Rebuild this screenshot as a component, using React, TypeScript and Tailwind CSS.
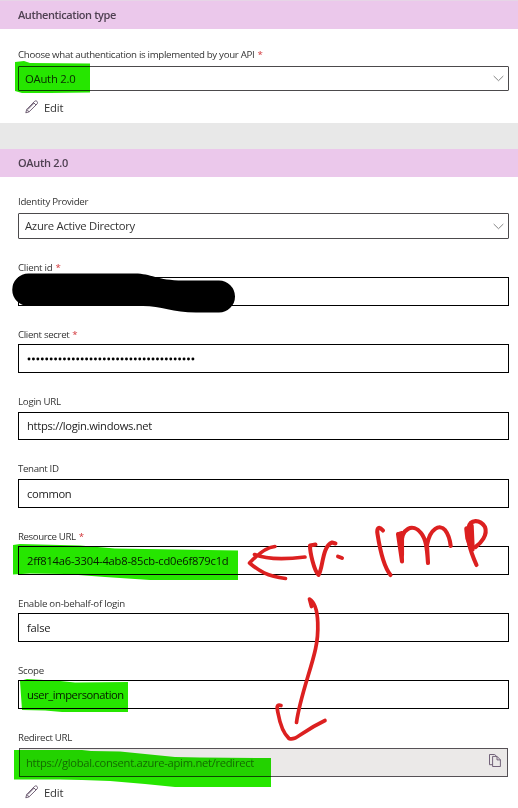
import React from "react";

const Label = ({ text, required, className }: { text: string; required?: boolean; className: string }) => (
  <div className={`flex h-4 items-center gap-[3px] whitespace-nowrap pt-0.5 text-[9.7px] leading-4 text-[#333] ${className}`}>
    <span>{text}</span>
    {required && <span className="text-[#d13438]">*</span>}
  </div>
);

const Chevron = () => (
  <svg className="mr-[4px] h-[7px] w-[11px]" viewBox="0 0 11 7" fill="none" stroke="#777" strokeWidth="0.9">
    <path d="M.7 1 5.5 5.7 10.3 1" />
  </svg>
);

const Select = ({ value, className }: { value: string; className: string }) => (
  <div className="mt-1 flex items-center justify-between rounded-[1px] border border-[#4c4a4c] pl-1.5">
    <span className={`whitespace-nowrap text-[11.3px] leading-6 text-[#333] ${className}`}>{value}</span>
    <Chevron />
  </div>
);

const Input = ({ className, textClass, children }: { className: string; textClass: string; children?: React.ReactNode }) => (
  <div className={`flex items-center border border-black pl-2 pt-px text-[11.2px] text-[#222] ${className}`}>
    <span className={`whitespace-nowrap ${textClass}`}>{children}</span>
  </div>
);

const Edit = () => (
  <div className="flex h-5 items-center gap-[6px] pl-[7px] text-[11.3px] text-[#333]">
    <svg className="mb-0.5 h-[14px] w-[13px]" viewBox="0 0 13 14" fill="none" stroke="#59465f" strokeWidth="0.85" strokeLinejoin="round">
      <path d="M.8 12.8 1.7 9.5 9.4 1.5C10.2.7 11.2.7 12 1.4S12.7 3.2 12 4L4.1 11.8ZM1.7 9.5l2.4 2.3M8.5 2.5l2.5 2.5M2.8 9.5 9.2 3" />
    </svg>
    <span className="tracking-[-0.2px]">Edit</span>
  </div>
);

const SectionTitle = ({ text, className }: { text: string; className: string }) => (
  <div className={`flex items-center bg-[#ebc8eb] pl-[18px] text-[11px] font-semibold text-[#4f4152] ${className}`}>{text}</div>
);

export default function App() {
  return (
    <div className="relative isolate h-[808px] w-[518px] overflow-hidden bg-white font-['Open_Sans','Noto_Sans',sans-serif]">
      <SectionTitle text="Authentication type" className="h-[29px] border-t border-[#e6d5e6] tracking-[-0.4px]" />
      <section className="h-[94px] pl-[18px] pr-[9px] pt-[17px]">
        <Label text="Choose what authentication is implemented by your API" required className="tracking-[-0.31px]" />
        <div className="h-[25px] [&>div]:h-[25px]"><Select value="OAuth 2.0" className="tracking-[-0.25px]" /></div>
        <div className="mt-[7px]"><Edit /></div>
      </section>
      <div className="h-[26px] bg-[#e8e8e8]" />
      <SectionTitle text="OAuth 2.0" className="h-7 tracking-[-0.3px]" />
      <section className="flex flex-col pl-[18px] pr-[9px] pt-4">
        <Label text="Identity Provider" className="tracking-[-0.28px]" />
        <Select value="Azure Active Directory" className="tracking-[-0.28px]" />
        <Label text="Client id" required className="mt-5 tracking-[-0.25px]" />
        <Input className="mt-0.5 h-[29px]" textClass="" />
        <Label text="Client secret" required className="mt-5 tracking-[-0.35px]" />
        <Input className="mt-0.5 h-[29px]" textClass="">
          <svg className="h-1 w-[170px]" viewBox="0 0 170 4">
            {Array.from({ length: 38 }, (_, i) => <circle key={i} cx={2 + i * 4.43} cy="2" r="1.45" />)}
          </svg>
        </Input>
        <Label text="Login URL" className="mt-5 tracking-[-0.25px]" />
        <Input className="mt-[3px] h-7" textClass="tracking-[-0.3px]">https://login.windows.net</Input>
        <Label text="Tenant ID" className="mt-5 tracking-[-0.35px]" />
        <Input className="mt-[3px] h-[29px]" textClass="tracking-[-0.35px]">common</Input>
        <Label text="Resource URL" required className="mt-5 tracking-[-0.4px]" />
        <Input className="mt-0.5 h-[29px]" textClass="tracking-[-0.22px]">2ff814a6-3304-4ab8-85cb-cd0e6f879c1d</Input>
        <Label text="Enable on-behalf-of login" className="mt-5 tracking-[-0.24px]" />
        <Input className="mt-0.5 h-[29px]" textClass="tracking-[-0.2px]">false</Input>
        <Label text="Scope" className="mt-5 tracking-[-0.25px]" />
        <Input className="mt-0.5 h-[29px]" textClass="tracking-[-0.42px]">user_impersonation</Input>
        <Label text="Redirect URL" className="mt-5 tracking-[-0.33px]" />
        <div className="ml-px mr-px mt-[3px] flex h-[29px] items-center justify-between border border-[#565156] bg-[#ebe9e8] pl-1.5 pr-1.5 pt-px text-[11.2px] text-[#777]">
          <span className="whitespace-nowrap tracking-[-0.28px]">https://global.consent.azure-apim.net/redirect</span>
          <svg className="mb-1.5 h-[13px] w-3" viewBox="0 0 12 13" fill="none" stroke="#65536d" strokeWidth="0.9">
            <path d="M3.6 10.7H.5V.5h5.2l1.8 1.8M3.6 2.4h4.5l3.3 3.4v6.7H3.6ZM8 2.6v3.3h3.3" />
          </svg>
        </div>
        <div className="mt-[6px]"><Edit /></div>
      </section>

      <svg className="pointer-events-none absolute inset-0 mix-blend-multiply" width="518" height="808" viewBox="0 0 518 808" fill="#26e600">
        <path d="M15 62 24 61 30 63 90 63.500V92.500L50 93 22 93 15 91Z" />
        <path d="M13 545 20 544 80 545.500 115 548.500 238 550.500V580H150L105 577 65 574 30 573.500 13 574.500Z" />
        <path d="M20 681 27 679 60 681 75 682.500 128 682V712L62 712 45 710.500 22 710Z" />
        <path d="M14 750H82L91 751 120 751.500 175 757 200 757.500 271 758V787H175L145 784 110 781 82 780 60 779.500H14Z" />
      </svg>
      <svg className="pointer-events-none absolute inset-0" width="518" height="808" viewBox="0 0 518 808" fill="none" strokeLinecap="round" strokeLinejoin="round">
        <path d="M28.500 273.500H135C151 273.500 157 280.500 183 280.500H219A16 16 0 0 1 219 312.500H196C173 312.500 161 306 143 306H28.500A16 16 0 0 1 28.500 273.500Z" fill="black" />
        <g stroke="#dc2020" strokeWidth="3.600">
          <path d="M275 546.500C267 547 258 554 249.500 563 259 571 267 576 285.500 578.500M254.500 554.500C263 558 280 560 305 557" />
          <path d="M315.500 544.500 310 545.500C310 553 314 570 318.500 575 323 569 322 546 332 542.500L335.500 543.500M338 556.500 342 558" strokeWidth="4" />
          <path d="M383 530.500C379 525.500 376.500 528 377.500 534 380 550 384 567 390.500 575" strokeWidth="4.100" />
          <path d="M398 534 402 561.500 401.500 545C401 528 413 523 421 533 426 539 427 548 428 563M428 563 427 545C430 528 440 524 445 530 449 535 450 540 450.700 546" strokeWidth="4.100" />
          <path d="M399 534 402 533 402 555" strokeWidth="4.100" />
          <path d="M476.500 565C472 555 466 539 468.500 528 470 519 480 519 485 527 488 535 481 543 475.500 547" strokeWidth="4.100" />
          <path d="M467 529 468 538 472 549 471 526" strokeWidth="5.500" />
          <path d="M311.500 606.500 309.500 599C321 606 318 638 315.500 649 311 670 300 697 296.500 722.500M281 705.500C276 704 277 708 278 713 280 724 284 734 289 738.500 296 741 299 733 325 720.500" strokeWidth="3.700" />
        </g>
      </svg>
    </div>
  );
}
